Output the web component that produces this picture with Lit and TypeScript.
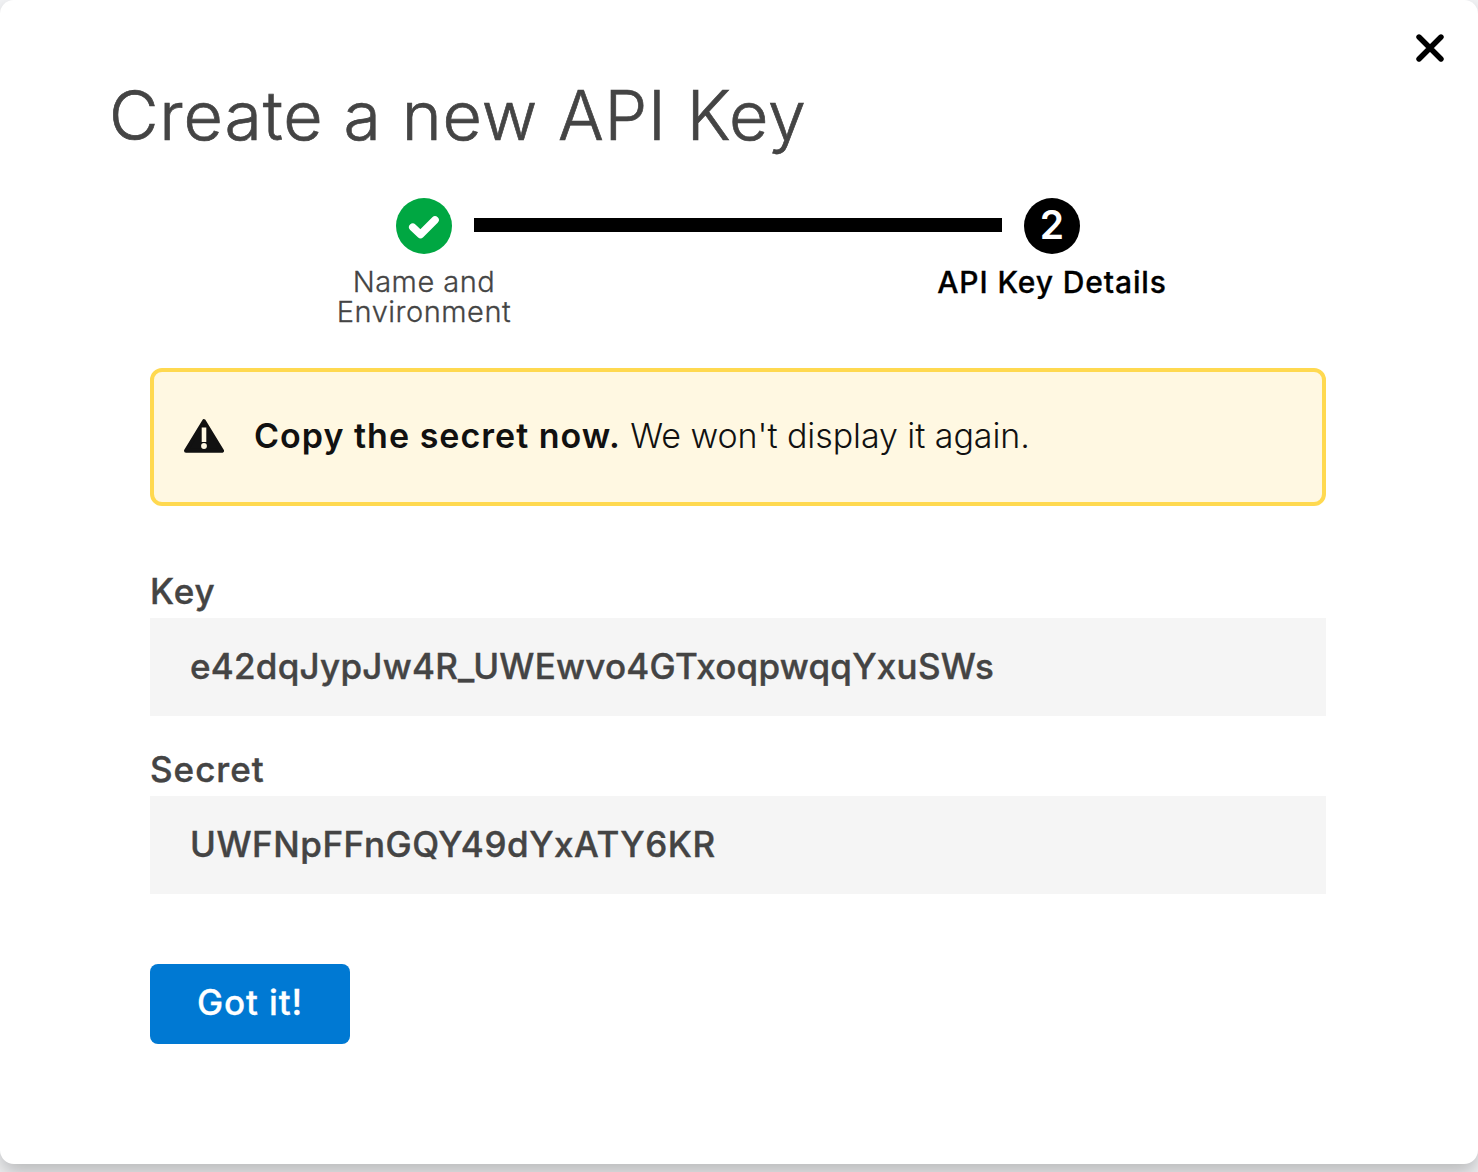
import { LitElement, html, css } from "lit";
import { customElement } from "lit/decorators.js";

@customElement("app-root")
export class AppRoot extends LitElement {
  static styles = css`
    :host { display: block; width: 1478px; height: 1172px; overflow: hidden; background: #f3f4f6; font-family: Inter, "Noto Sans CJK JP", sans-serif; color: #444; }
    * { box-sizing: border-box; }
    .dialog { position: relative; height: 1164px; background: #fff; box-shadow: 0 10px 20px rgba(0,0,0,.24); padding: 77px 152px 0 150px; border-radius: 14px; }
    .close { position: absolute; right: 34px; top: 34px; width: 28px; height: 28px; padding: 0; border: 0; background: none; }
    svg { display: block; }
    h1 { margin: 0 0 0 -41px; font-weight: 300; font-size: 68px; line-height: 76px; height: 121px; white-space: nowrap; letter-spacing: .86px; -webkit-text-stroke: .7px #444; }
    .steps { display: flex; height: 170px; margin-left: 160px; }
    .step { width: 228px; display: flex; flex-direction: column; align-items: center; font-size: 29px; font-weight: 300; line-height: 30px; text-align: center; white-space: nowrap; letter-spacing: .5px; }
    .label { -webkit-text-stroke: .3px currentColor; }
    .dot { width: 56px; height: 56px; border-radius: 50%; display: flex; align-items: center; justify-content: center; background: #000; color: #fff; font-weight: 600; font-size: 39px; margin-bottom: 13px; letter-spacing: 0; padding-bottom: 3px; }
    .done { background: #00a742; padding: 2px 0 0; }
    .bar { width: 528px; height: 14px; margin: 20px -64px 0; background: #000; }
    .active { color: #000; font-weight: 500; font-size: 30px; letter-spacing: .88px; }
    .alert { height: 138px; border: 4px solid #ffd950; border-radius: 12px; background: #fff8e2; display: flex; align-items: center; padding: 0 0 3px 30px; gap: 30px; color: #111; font-size: 34px; font-weight: 300; margin-bottom: 60px; white-space: nowrap; }
    b { font-weight: 600; letter-spacing: 1.02px; }
    .rest { letter-spacing: -.07px; }
    label { display: block; font-size: 35px; font-weight: 500; line-height: 50px; height: 52px; letter-spacing: 1px; -webkit-text-stroke: .4px #444; }
    .field { height: 98px; background: #f5f5f5; padding-left: 40px; line-height: 96px; font-weight: 500; font-size: 35px; margin-bottom: 28px; -webkit-text-stroke: .4px #444; }
    .key { letter-spacing: .25px; }
    .secret { letter-spacing: .54px; }
    .ok { margin-top: 42px; width: 200px; height: 80px; border: 0; border-radius: 8px; background: #0079d3; color: #fff; font: 500 35px/76px Inter, sans-serif; padding: 0 0 4px; letter-spacing: .9px; -webkit-text-stroke: .3px #fff; }
  `;
  render() {
    return html`<div class="dialog">
      <button class="close" aria-label="Close"><svg width="28" height="28" viewBox="0 0 28 28"><path d="M3 3 25 25M25 3 3 25" stroke="#000" stroke-width="5.4" stroke-linecap="round"/></svg></button>
      <h1>Create a new API Key</h1>
      <div class="steps">
        <div class="step"><div class="dot done"><svg width="32" height="26" viewBox="0 0 32 26"><path d="M4.8 13.2 12.5 20.5 27 6" fill="none" stroke="#fff" stroke-width="7.6" stroke-linecap="round" stroke-linejoin="round"/></svg></div><span class="label">Name and<br>Environment</span></div>
        <div class="bar"></div>
        <div class="step active"><div class="dot">2</div><span class="label">API Key Details</span></div>
      </div>
      <div class="alert"><svg width="40" height="34" viewBox="0 0 40 34"><path d="M20 2.2 38 31.7H2Z" fill="#111" stroke="#111" stroke-width="4" stroke-linejoin="round"/><path d="M17.7 8.5h4.6V23h-4.6Z" fill="#fff8e2"/><circle cx="20" cy="27" r="2.9" fill="#fff8e2"/></svg><span><b>Copy the secret now.</b> <span class="rest">We won't display it again.</span></span></div>
      <label>Key</label><div class="field key">e42dqJypJw4R_UWEwvo4GTxoqpwqqYxuSWs</div>
      <label>Secret</label><div class="field secret">UWFNpFFnGQY49dYxATY6KR</div>
      <button class="ok">Got it!</button>
    </div>`;
  }
}
